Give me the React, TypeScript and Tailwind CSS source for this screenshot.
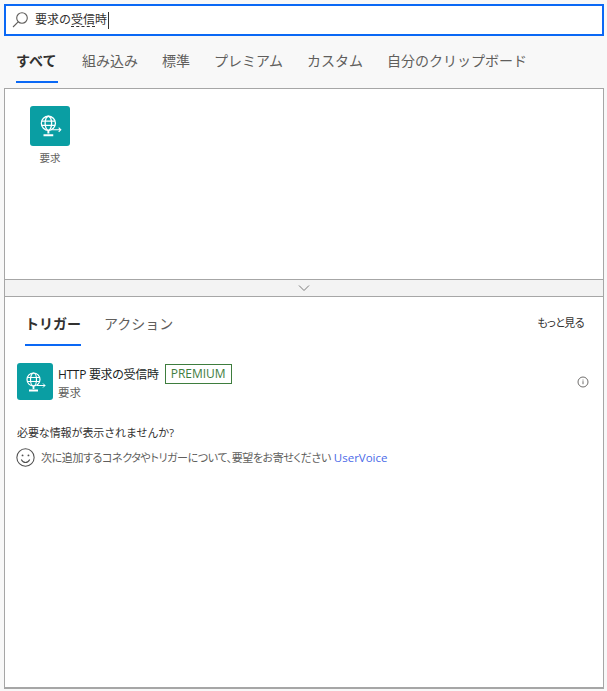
import React from "react";

function GlobeIcon({ size }: { size: number }) {
  return (
    <svg width={size} height={size} viewBox="0 0 24 24" fill="none" stroke="#fff" strokeWidth="1.2">
      <circle cx="10.5" cy="9.5" r="6.5" />
      <ellipse cx="10.5" cy="9.5" rx="3" ry="6.5" />
      <path d="M4.3 7.5h12.4M4.3 11.5h12.4" />
      <path d="M10.5 16v3M6 20.5h9" strokeWidth="1.8" />
      <path d="M14 15.5h8M20 13.5l2 2-2 2" strokeWidth="1" />
    </svg>
  );
}

function Tile({ box, icon, radius }: { box: string; icon: number; radius: string }) {
  return (
    <div className={`${box} ${radius} bg-[#0a9ea3] flex items-center justify-center`}>
      <GlobeIcon size={icon} />
    </div>
  );
}

export default function App() {
  const tabs = ["組み込み", "標準", "プレミアム", "カスタム", "自分のクリップボード"];
  return (
    <div className="w-[607px] h-[691px] bg-[#f8f8f8] overflow-hidden pt-1 pl-1 pr-[3px] pb-[2px] flex flex-col font-['Open_Sans','Noto_Sans_CJK_JP',sans-serif] text-[#323130]">
      <div className="h-[32px] border-2 border-[#0a68f5] bg-white flex items-center pl-[5px] shrink-0">
        <svg width="18" height="18" viewBox="0 0 18 18" fill="none" stroke="#605e5c" strokeWidth="1.1">
          <circle cx="11" cy="7" r="5.3" />
          <path d="M7.2 10.8L2 16" />
        </svg>
        <span className="ml-[6px] text-[12px] leading-[16px] text-[#323130] relative">
          要求の<span className="underline decoration-dashed decoration-[#323130] underline-offset-2">受信</span>時
        </span>
        <span className="w-px h-[17px] bg-[#323130] ml-px" />
      </div>

      <div className="h-[52px] flex shrink-0 items-start text-[14px] leading-[20px] text-[#605e5c]">
        <div className="ml-3 mr-[24px] pt-[15px] h-[47px] w-[42px] border-b-2 border-[#0a68f5] text-[#323130] font-bold whitespace-nowrap">すべて</div>
        <div className="flex gap-6 pt-[15px]">
          {tabs.map((t) => (
            <span key={t} className="whitespace-nowrap">{t}</span>
          ))}
        </div>
      </div>

      <div className="flex-1 border border-[#a6a6a6] bg-white flex flex-col min-h-0 border-b-2">
        <div className="h-[190px] shrink-0 pl-[25px] pt-[17px]">
          <div className="w-[40px] flex flex-col items-center">
            <Tile box="w-[40px] h-[40px]" icon={26} radius="rounded-[3px]" />
            <span className="mt-1 text-[10.5px] leading-[16px] text-[#605e5c]">要求</span>
          </div>
        </div>

        <div className="h-[18px] shrink-0 bg-[#f3f3f3] border-y border-[#a6a6a6] flex items-center justify-center">
          <svg width="12" height="8" viewBox="0 0 12 8" fill="none" stroke="#7a7a7a" strokeWidth="1">
            <path d="M1 1.5l5 5 5-5" />
          </svg>
        </div>

        <div className="flex-1 flex flex-col">
          <div className="flex justify-between h-[49px] shrink-0 pl-5 pr-[18px]">
            <div className="flex gap-[23px]">
              <div className="h-[49px] w-[56px] pt-[17px] border-b-2 border-[#0a68f5] text-[14px] leading-[20px] font-semibold text-[#323130] whitespace-nowrap">トリガー</div>
              <div className="pt-[17px] text-[14px] leading-[20px] text-[#605e5c] whitespace-nowrap">アクション</div>
            </div>
            <div className="pt-[17px] pr-px text-[11px] leading-[18px] text-[#323130] [font-feature-settings:'palt'] tracking-[-0.6px]">もっと見る</div>
          </div>

          <div className="flex items-start mt-[17px] pl-3 pr-[14px] h-[37px] shrink-0">
            <Tile box="w-[36px] h-[37px]" icon={24} radius="rounded-[3px]" />
            <div className="ml-[5px] flex flex-col flex-1 pt-px">
              <div className="flex items-center h-[20px]">
                <span className="text-[12px] leading-[18px] pt-[2px] text-[#201f1e] [font-feature-settings:'palt'] tracking-[-0.3px] whitespace-nowrap">HTTP 要求の受信時</span>
                <span className="ml-[6px] h-[20px] border border-[#3e7d3e] px-[5px] text-[12px] leading-[18px] text-[#3e7d3e]">PREMIUM</span>
              </div>
              <span className="text-[11.5px] leading-[18px] text-[#605e5c]">要求</span>
            </div>
            <svg className="mt-[13px]" width="12" height="12" viewBox="0 0 12 12" fill="none" stroke="#605e5c" strokeWidth="0.9">
              <circle cx="6" cy="6" r="5" />
              <path d="M6 5.2v3M6 3.6v.9" />
            </svg>
          </div>

          <div className="mt-[24px] pl-3 text-[11px] leading-[18px] text-[#323130] tracking-[-0.1px]">必要な情報が表示されませんか?</div>
          <div className="mt-[6px] pl-[11px] flex items-center">
            <svg width="19" height="19" viewBox="0 0 18 18" fill="none" stroke="#505050" strokeWidth="1">
              <circle cx="9" cy="9" r="8.2" />
              <circle cx="6.2" cy="7" r="0.9" fill="#505050" stroke="none" />
              <circle cx="11.8" cy="7" r="0.9" fill="#505050" stroke="none" />
              <path d="M5 10.8c1 2 2.4 2.9 4 2.9s3-.9 4-2.9" />
            </svg>
            <span className="ml-[6px] text-[11px] leading-[16px] text-[#605e5c] whitespace-nowrap [font-feature-settings:'palt'] tracking-[-0.4px]">
              次に追加するコネクタやトリガーについて、要望をお寄せください
            </span>
            <span className="ml-[3px] text-[11.5px] leading-[16px] text-[#4a6ae8]">UserVoice</span>
          </div>
        </div>
      </div>
    </div>
  );
}
